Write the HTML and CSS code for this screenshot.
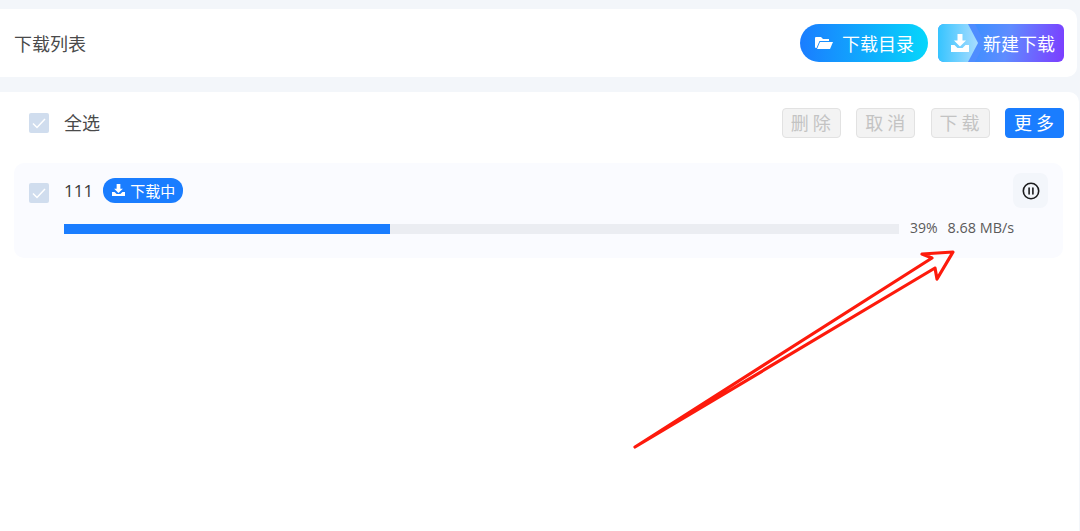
FILE: index.html
```html
<!DOCTYPE html>
<html>
<head>
<meta charset="utf-8">
<title>下载列表</title>
<link rel="stylesheet" href="styles.css">
</head>
<body>
<div class="page">
	<div class="topBar">
		<div class="topBar-title">下载列表</div>
		<div class="topBar-btns">
			<div class="dirBtn">
				<svg class="dirBtn-icon" viewBox="0 0 18 14"><path fill="#fff" d="M1 1h5l2 2h6v2H4.500L1.500 12H1a1 1 0 0 1-1-1V2a1 1 0 0 1 1-1z"/><path fill="#fff" d="M5 6h13l-3 7H2z"/></svg>
				<span>下载目录</span>
			</div>
			<div class="newBtn">
				<svg class="newBtn-shape" viewBox="0 0 50 38">
					<defs><linearGradient id="shapeFill"><stop offset="0" stop-color="#36c4ff"/><stop offset="1" stop-color="#a9dcff"/></linearGradient></defs>
					<path fill="#4f8dff" d="M30 0h7l10 19-10 19h-7z"/>
					<path fill="url(#shapeFill)" d="M0 0h30l10 19-10 19H0z"/>
				</svg>
				<svg class="newBtn-icon" viewBox="0 0 18 18"><path fill="#fff" d="M6.500 0h5v6.500H15l-6 6-6-6h3.500z"/><path fill="#fff" d="M0 11h3.500l3 3h5l3-3H18v7H0z"/></svg>
				<span>新建下载</span>
			</div>
		</div>
	</div>
	<div class="listPanel">
		<div class="toolRow">
			<div class="checkBox"><svg viewBox="0 0 20 20"><path d="M4 10.500l4 4 8-8.500" fill="none" stroke="#fff" stroke-width="1.500"/></svg></div>
			<div class="toolRow-label">全选</div>
			<div class="toolRow-btns">
				<div class="smallBtn">删除</div>
				<div class="smallBtn">取消</div>
				<div class="smallBtn">下载</div>
				<div class="smallBtn smallBtn-on">更多</div>
			</div>
		</div>
		<div class="task">
			<div class="task-head">
				<div class="checkBox task-check"><svg viewBox="0 0 20 20"><path d="M4 10.500l4 4 8-8.500" fill="none" stroke="#fff" stroke-width="1.500"/></svg></div>
				<div class="task-name">111</div>
				<div class="task-tag">
					<svg viewBox="0 0 14 14"><path fill="#fff" d="M5 0h4v5h2.700L7 9.700 2.300 5H5z"/><path fill="#fff" d="M0 8.500h2.700l2.300 2.300h4l2.300-2.300H14V13H0z"/></svg>
					<span>下载中</span>
				</div>
				<div class="pauseBtn">
					<svg viewBox="0 0 18 18"><circle cx="9" cy="9" r="7.700" fill="none" stroke="#1c1c1e" stroke-width="1.600"/><path d="M7.100 6v6M10.900 6v6" stroke="#1c1c1e" stroke-width="1.600" stroke-linecap="round"/></svg>
				</div>
			</div>
			<div class="task-progress">
				<div class="bar"><div class="bar-fill" style="width: 39%;"></div></div>
				<div class="task-pct">39%</div>
				<div class="task-speed">8.68 MB/s</div>
			</div>
		</div>
	</div>
</div>
<svg class="arrow" viewBox="0 0 1080 531"><path d="M635 447L932 258 922 254 953 252 937 279 935 268z" fill="none" stroke="#fd1a0c" stroke-width="3.200" stroke-linejoin="round"/></svg>
</body>
</html>
```
FILE: styles.css
```css
html, body { margin: 0; height: 100%; overflow: hidden; }
body { background: #f3f6fa; font-family: "Noto Sans CJK SC", "Open Sans", sans-serif; color: #4a4a4a; }
.page { width: 1077px; padding-top: 9px; }

.topBar {
	height: 68px;
	background: #fff;
	border-radius: 0 10px 10px 0;
	display: flex;
	align-items: center;
	justify-content: space-between;
	padding: 0 13px 0 14px;
	box-sizing: border-box;
}
.topBar-title { font-size: 18px; color: #4a4a4a; }
.topBar-btns { display: flex; gap: 10px; }
.dirBtn {
	width: 128px;
	height: 38px;
	border-radius: 19px;
	background: linear-gradient(90deg, #1a7dff, #06d6fb);
	color: #fff;
	font-size: 18px;
	display: flex;
	align-items: center;
	padding-left: 15px;
	box-sizing: border-box;
}
.dirBtn-icon { width: 18px; height: 14px; margin-right: 9px; }
.newBtn {
	position: relative;
	width: 126px;
	height: 38px;
	border-radius: 6px;
	overflow: hidden;
	background: linear-gradient(100deg, #3f8fff 30%, #5f8cff 55%, #7c3cff 100%);
	color: #fff;
	font-size: 18px;
	display: flex;
	align-items: center;
	padding-left: 45px;
	box-sizing: border-box;
}
.newBtn span { position: relative; }
.newBtn-shape { position: absolute; left: 0; top: 0; width: 50px; height: 38px; }
.newBtn-icon { position: absolute; left: 13px; top: 10px; width: 18px; height: 18px; }

.listPanel {
	margin: 15px -2px 0 0;
	height: 440px;
	background: #fff;
	border-radius: 0 10px 0 0;
	padding: 0 15px 0 14px;
}
.toolRow { height: 61px; display: flex; align-items: center; padding-left: 15px; }
.checkBox { width: 20px; height: 20px; border-radius: 2px; background: #d0ddee; flex-shrink: 0; }
.checkBox svg { display: block; width: 20px; height: 20px; }
.toolRow-label { margin: 0 0 2px 15px; font-size: 18px; }
.toolRow-btns { margin-left: auto; display: flex; gap: 15.4px; }
.smallBtn {
	width: 59px;
	height: 30px;
	line-height: 26px;
	box-sizing: border-box;
	border: 1px solid #e2e2e2;
	border-radius: 4px;
	background: #f3f3f3;
	color: #c3c3c3;
	font-size: 18px;
	letter-spacing: 4px;
	padding-left: 3px;
	text-align: center;
}
.smallBtn-on { border-color: #1a7dff; background: #1a7dff; color: #fff; }

.task {
	margin: 10px 1px 0 0;
	height: 95px;
	background: #fafbff;
	border-radius: 10px;
	padding: 10px 15px 0 15px;
	box-sizing: border-box;
}
.task-head { display: flex; align-items: center; height: 35px; }
.task-check { margin-top: 4px; }
.task-name { margin-left: 15px; font-size: 17px; color: #3c3c3c; font-family: "Open Sans", sans-serif; }
.task-tag {
	margin-left: 10px;
	height: 25px;
	width: 80px;
	border-radius: 12px;
	background: #1a7dff;
	color: #fff;
	font-size: 15px;
	display: flex;
	align-items: center;
	padding-left: 9px;
	box-sizing: border-box;
}
.task-tag svg { width: 13px; height: 13px; margin-right: 5px; }
.pauseBtn {
	margin-left: auto;
	width: 35px;
	height: 35px;
	border-radius: 8px;
	background: #f3f6fb;
	display: flex;
	align-items: center;
	justify-content: center;
}
.pauseBtn svg { width: 18px; height: 18px; }
.task-progress { display: flex; align-items: flex-start; margin: 11px 0 0 35px; height: 20px; font-family: "Open Sans", sans-serif; font-size: 14px; line-height: 17px; color: #5a5a5a; }
.bar { width: 835px; height: 10px; margin-top: 5px; background: #ebedf2; }
.bar-fill { height: 100%; background: #1a7dff; }
.task-pct { margin-left: 11px; }
.task-speed { margin-left: 10px; font-size: 14.4px; }

.arrow { position: absolute; left: 0; top: 0; width: 1080px; height: 531px; pointer-events: none; }
```
